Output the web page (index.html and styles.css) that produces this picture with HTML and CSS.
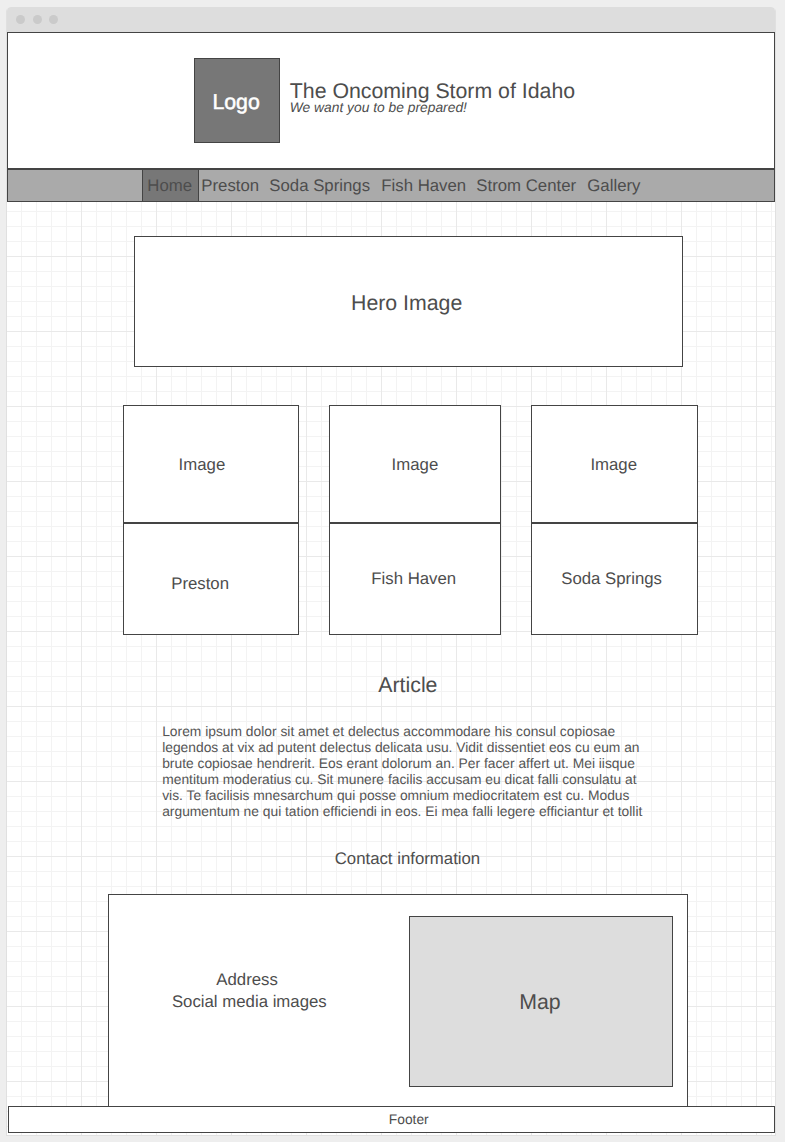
FILE: index.html
```html
<!DOCTYPE html>
<html lang="en">
<head>
<meta charset="utf-8">
<title>The Oncoming Storm of Idaho</title>
<link rel="stylesheet" href="styles.css">
</head>
<body>
<div class="window">
  <div class="titlebar"><i class="dot"></i><i class="dot"></i><i class="dot"></i></div>
  <header class="header">
    <div class="logo large">Logo</div>
    <div class="brand">
      <h1 class="title large">The Oncoming Storm of Idaho</h1>
      <p class="tagline small">We want you to be prepared!</p>
    </div>
  </header>
  <nav class="nav">
    <a class="link home">Home</a>
    <a class="link preston">Preston</a>
    <a class="link soda">Soda Springs</a>
    <a class="link fish">Fish Haven</a>
    <a class="link strom">Strom Center</a>
    <a class="link">Gallery</a>
  </nav>
  <main class="main">
    <section class="hero large">Hero Image</section>
    <section class="cards">
      <article class="card card-preston"><div class="picture">Image</div><div class="caption">Preston</div></article>
      <article class="card card-fish"><div class="picture">Image</div><div class="caption">Fish Haven</div></article>
      <article class="card card-soda"><div class="picture">Image</div><div class="caption">Soda Springs</div></article>
    </section>
    <h2 class="article-title large">Article</h2>
    <p class="article small">Lorem ipsum dolor sit amet et delectus accommodare his consul copiosae<br>legendos at vix ad putent delectus delicata usu. Vidit dissentiet eos cu eum an<br>brute copiosae hendrerit. Eos erant dolorum an. Per facer affert ut. Mei iisque<br>mentitum moderatius cu. Sit munere facilis accusam eu dicat falli consulatu at<br>vis. Te facilisis mnesarchum qui posse omnium mediocritatem est cu. Modus<br>argumentum ne qui tation efficiendi in eos. Ei mea falli legere efficiantur et tollit</p>
    <h3 class="contact-title">Contact information</h3>
    <section class="contact">
      <div class="details"><p class="address">Address</p><p class="social">Social media images</p></div>
      <div class="map large">Map</div>
    </section>
  </main>
  <footer class="footer small">Footer</footer>
</div>
</body>
</html>
```
FILE: styles.css
```css
* { box-sizing: border-box; margin: 0; padding: 0; }
body {
  background: #eee;
  color: #4d4d4d;
  font: 16.8px/22px "Liberation Sans", Arial, sans-serif;
  text-rendering: geometricPrecision;
  padding: 7px;
  height: 1142px;
  overflow: hidden;
  white-space: nowrap;
}
h1, h2, h3 { font-weight: normal; font-size: inherit; }
.large, h1.large, h2.large { font-size: 21.3px; line-height: 26px; }
.small { font-size: 13.82px; line-height: 16px; }

.window {
  width: 768px;
  height: 1128px;
  border-radius: 4px 4px 0 0;
  box-shadow: -1px 1px 0 #e0e0e0, 1px 1px 0 #e0e0e0;
  background-color: #fff;
  background-image:
    linear-gradient(90deg, #e9e9e9 1px, transparent 1px),
    linear-gradient(#e9e9e9 1px, transparent 1px),
    linear-gradient(90deg, #f3f3f3 1px, transparent 1px),
    linear-gradient(#f3f3f3 1px, transparent 1px);
  background-size: 75px 75px, 75px 75px, 15px 15px, 15px 15px;
  background-position: -1px 0, 0 24px, -1px 0, 0 9px;
}
.titlebar {
  display: flex;
  height: 25px;
  padding: 8px 0 0 9px;
  border-radius: 4px 4px 0 0;
  background: #ddd;
}
.dot { width: 9px; height: 9px; margin-right: 7.6px; border-radius: 50%; background: #cacaca; }

.header {
  display: flex;
  height: 137px;
  padding: 25px 0 0 186px;
  border: 1px solid #444;
  background: #fff;
}
.logo {
  width: 86px;
  height: 85px;
  padding: 30px 0 0 17.4px;
  border: 1px solid #444;
  background: #777;
  color: #fff;
  -webkit-text-stroke: 0.5px #fff;
}
.brand { padding: 23px 0 0 9.8px; }
.brand .title { line-height: 20px; }
.tagline { margin-top: -2px; font-style: italic; }

.nav {
  display: flex;
  height: 33px;
  padding-left: 134px;
  border: 1px solid #444;
  background: #aaa;
}
.link { line-height: 31px; }
.home {
  width: 57px;
  margin: -1px 0;
  padding-left: 4.3px;
  line-height: 31px;
  border: 1px solid #444;
  background: #777;
}
.preston { width: 70.3px; padding-left: 2.3px; }
.soda { width: 112px; }
.fish { width: 95px; }
.strom { width: 111px; }

.main { height: 904px; padding-top: 34px; }
.hero {
  width: 549px;
  height: 131px;
  margin-left: 127px;
  padding: 53px 0 0 216px;
  border: 1px solid #444;
  background: #fff;
}
.cards { display: flex; gap: 30px; margin: 38px 0 0 116px; }
.picture, .caption { border: 1px solid #444; background: #fff; }
.picture { height: 118px; padding-top: 48px; }
.caption { height: 112px; padding-top: 44px; }
.card-preston { width: 176px; }
.card-preston .picture { padding-left: 54.6px; }
.card-preston .caption { padding: 49px 0 0 47.2px; }
.card-fish { width: 172px; }
.card-fish .picture { padding-left: 61.6px; }
.card-fish .caption { padding-left: 41.3px; }
.card-soda { width: 167px; }
.card-soda .picture { padding-left: 58.4px; }
.card-soda .caption { padding-left: 29.2px; }

.article-title { margin: 37px 0 0 371.3px; }
.article { margin: 25px 0 0 155.2px; color: #555; }
.contact-title { margin: 29px 0 0 327.7px; }
.contact {
  display: flex;
  width: 580px;
  height: 213px;
  margin: 24px 0 0 101px;
  padding-top: 21px;
  border: 1px solid #444;
  border-bottom: 0;
  background: #fff;
}
.details { width: 300px; padding-top: 53px; }
.address { padding-left: 107.3px; }
.social { padding-left: 62.9px; }
.map {
  width: 264px;
  height: 171px;
  padding: 72px 0 0 109.2px;
  border: 1px solid #444;
  background: #ddd;
}
.footer {
  width: 767px;
  height: 27px;
  margin-left: 1px;
  padding: 4px 0 0 379.8px;
  border: 1px solid #444;
  background: #fff;
}
```
